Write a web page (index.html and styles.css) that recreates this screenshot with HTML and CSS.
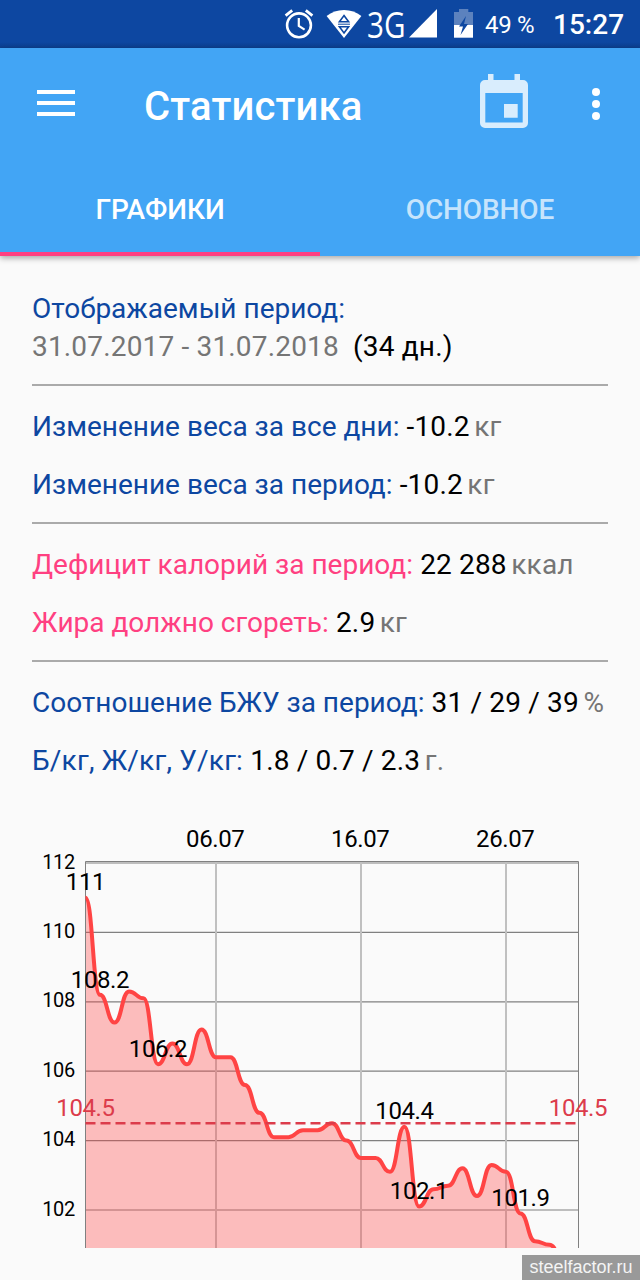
FILE: index.html
```html
<!DOCTYPE html>
<html lang="ru">
<head>
    <meta charset="UTF-8">
    <meta name="viewport" content="width=device-width, initial-scale=1.0">
    <title>Статистика</title>
    <link rel="stylesheet" href="styles.css">
</head>
<body>
    <div class="status-bar">
        <!-- Alarm -->
        <svg class="icon-alarm" width="30" height="48" viewBox="284 0 30 48" fill="none" stroke="#fff">
            <circle cx="299" cy="25.3" r="11.9" stroke-width="2.6"/>
            <path d="M298.8 18v8l5.8 3.6" stroke-width="2.2"/>
            <path d="M285.6 15.6l6.6-5.2M312.4 15.6l-6.6-5.2" stroke-width="2.8"/>
        </svg>
        <!-- Wi-Fi -->
        <svg class="icon-wifi" width="36" height="48" viewBox="326 0 36 48">
            <path d="M344 38L326.6 16Q334 10 344 10T361.4 16Z" fill="#fff"/>
            <path d="M344 15.5l4.6 6.3h-9.2zM344 33l4.6-6.3h-9.2z" fill="#fff" stroke="#0d47a1" stroke-width="1.6"/>
            <path d="M338 24.2h12" stroke="#0d47a1" stroke-width="1"/>
        </svg>
        <svg class="icon-network" width="73" height="54" viewBox="364 0 73 54" fill="#fff">
            <text class="network-text" x="367" y="37.6" textLength="38.500" lengthAdjust="spacingAndGlyphs">3G</text>
            <path d="M409 37.4L437 9v28.4z"/>
        </svg>
        <!-- Battery -->
        <svg class="icon-battery" width="19" height="48" viewBox="454 0 19 48">
            <path d="M454 12h5V9h9.300v3h4.700v13h-19z" fill="#5c82be"/>
            <path d="M454 25h19v12.700h-19z" fill="#fff"/>
            <path d="M466 16l-7 10.500h4l-2.500 8.500 7.500-11h-4z" fill="#0d47a1"/>
        </svg>
        <span class="battery-level">49 %</span>
        <span class="clock">15:27</span>
    </div>

    <header>
        <div class="toolbar">
            <svg class="icon-menu" width="38" height="26" viewBox="0 0 38 26" fill="#fff">
                <path d="M0 0h38v4H0zM0 11h38v4H0zM0 22h38v4H0z"/>
            </svg>
            <h1>Статистика</h1>
            <svg class="icon-calendar" width="48" height="54" viewBox="0 0 48 54">
                <path fill-rule="evenodd" d="M8 0h5.500v6h21V0h5.500v6h3a5 5 0 0 1 5 5v38a5 5 0 0 1-5 5H5a5 5 0 0 1-5-5V11a5 5 0 0 1 5-5h3zM5.300 19v29.500h37.400V19zM24 30h13.700v13.700H24z"/>
            </svg>
            <svg class="icon-more" width="8" height="32" viewBox="0 0 8 32" fill="#fff">
                <circle cx="4" cy="4" r="4"/>
                <circle cx="4" cy="16" r="4"/>
                <circle cx="4" cy="28" r="4"/>
            </svg>
        </div>
        <nav class="tabs">
            <a class="tab active">ГРАФИКИ</a>
            <a class="tab">ОСНОВНОЕ</a>
        </nav>
    </header>

    <main>
        <section class="group period">
            <p class="label">Отображаемый период:</p>
            <p><span class="unit">31.07.2017 - 31.07.2018</span>&nbsp; (34 дн.)</p>
        </section>
        <section class="group">
            <p><span class="label">Изменение веса за все дни:</span> -10.2<span class="unit suffix">кг</span></p>
            <p><span class="label">Изменение веса за период:</span> -10.2<span class="unit suffix">кг</span></p>
        </section>
        <section class="group">
            <p><span class="label pink">Дефицит калорий за период:</span> 22 288<span class="unit suffix">ккал</span></p>
            <p><span class="label pink">Жира должно сгореть:</span> 2.9<span class="unit suffix">кг</span></p>
        </section>
        <section class="group">
            <p><span class="label">Соотношение БЖУ за период:</span> 31 / 29 / 39<span class="unit suffix">%</span></p>
            <p><span class="label wide">Б/кг, Ж/кг, У/кг:</span> 1.8 / 0.7 / 2.3<span class="unit suffix">г.</span></p>
        </section>
    </main>

    <svg class="chart" width="640" height="448" viewBox="0 800 640 448">
        <g id="grid"></g>
        <path id="area" class="area"/>
        <path class="frame" d="M85.500 1248V861.500H578.500V1248"/>
        <path id="line" class="line"/>
        <path class="limit" d="M85.500 1123.300H578"/>
        <g id="labels"></g>
    </svg>

    <div class="watermark">steelfactor.ru</div>

    <script>
        const weights = [111, 108.2, 107.4, 108.3, 108.1, 106.2, 106.8, 106.2, 107.2, 106.4, 106.4, 105.6,
            104.8, 104.1, 104.1, 104.3, 104.3, 104.5, 104, 103.5, 103.5, 103.1, 104.4, 102.1, 102.6, 102.7,
            103.2, 102.4, 103.3, 103.1, 101.9, 101.1, 101, 100.5];

        const left = 85.5;
        const step = 14.5;
        const x = i => left + i * step;
        const y = value => 863 + (112 - value) * 34.7;

        // Smooth line through all the points
        let d = `M${x(0)} ${y(weights[0])}`;
        for (let i = 1; i < weights.length; i++) {
            const middle = x(i) - step / 2;
            d += `C${middle} ${y(weights[i - 1])} ${middle} ${y(weights[i])} ${x(i)} ${y(weights[i])}`;
        }
        document.getElementById("line").setAttribute("d", d);
        document.getElementById("area").setAttribute("d", `${d}V1260H${left}Z`);

        // Grid and axis labels
        let grid = "";
        let labels = "";
        for (let value = 112; value >= 102; value -= 2) {
            grid += `<path class="grid-line" d="M${left} ${y(value)}H578.500"/>`;
            labels += `<text class="axis-y" x="75" y="${y(value) + 5.6}">${value}</text>`;
        }
        [["06.07", 9], ["16.07", 19], ["26.07", 29]].forEach(([date, i]) => {
            grid += `<path class="grid-line vertical" d="M${x(i)} 862V1248"/>`;
            labels += `<text x="${x(i) - 0.8}" y="847">${date}</text>`;
        });

        // Value labels above the points
        [0, 1, 5, 22, 23, 30].forEach(i => {
            labels += `<text x="${x(i)}" y="${y(weights[i]) - 7.3}">${weights[i]}</text>`;
        });
        labels += '<text class="limit-label" x="85.500" y="1116">104.5</text>';
        labels += '<text class="limit-label" x="578" y="1116">104.5</text>';

        document.getElementById("grid").innerHTML = grid;
        document.getElementById("labels").innerHTML = labels;
    </script>
</body>
</html>
```
FILE: styles.css
```css
body {
    margin: 0;
    width: 640px;
    height: 1280px;
    overflow: hidden;
    position: relative;
    background: #fafafa;
    font-family: Roboto, sans-serif;
    font-size: 28px;
    color: #000;
}

svg {
    display: block;
    flex-shrink: 0;
}

.status-bar {
    display: flex;
    height: 48px;
    padding-left: 284px;
    background: linear-gradient(#0d47a1 42px, #0c3f8f);
    color: #fff;
    line-height: 50px;
    white-space: nowrap;
}

.icon-wifi {
    margin-left: 12px;
}

.icon-network {
    margin-left: 2px;
    overflow: visible;
}

.network-text {
    font-family: "Open Sans", sans-serif;
    font-size: 37px;
}

.icon-battery {
    margin-left: 17px;
}

.battery-level {
    width: 68px;
    margin-left: 12px;
    font-size: 24px;
    letter-spacing: -0.3px;
}

.clock {
    font-weight: 500;
}

header {
    height: 208px;
    background: #42a5f5;
    box-shadow: 0 2px 6px rgba(0, 0, 0, 0.35);
}

.toolbar {
    display: flex;
    align-items: center;
    height: 112px;
    padding: 0 40px 0 37px;
}

.icon-menu {
    margin-bottom: 2px;
}

.toolbar h1 {
    flex: 1;
    margin: 6px 0 0 69px;
    font-size: 40px;
    font-weight: 500;
    letter-spacing: 0.15px;
    line-height: 48px;
    color: #fff;
}

.icon-calendar {
    margin: 0 64px 6px 0;
    fill: #d9edfd;
}

.tabs {
    display: flex;
    height: 96px;
}

.tab {
    flex: 1;
    box-sizing: border-box;
    border-bottom: 4px solid transparent;
    font-weight: 500;
    letter-spacing: -0.1px;
    line-height: 100px;
    text-align: center;
    color: #c6e4fc;
}

.tab.active {
    border-color: #ff4081;
    color: #fff;
}

main {
    padding: 34px 32px 0;
}

.group {
    padding: 12px 0 8px;
    border-top: 2px solid #aaa;
}

.group p {
    margin: 0;
    height: 58px;
    line-height: 58px;
    letter-spacing: 0.17px;
    white-space: nowrap;
}

.group.period {
    padding: 0 0 18px;
    border: none;
}

.group.period p {
    height: 38px;
    line-height: 38px;
}

.group .label {
    color: #0d47a1;
    letter-spacing: 0;
}

.group .label.pink {
    color: #ff4081;
}

.group .label.wide {
    letter-spacing: 0.2px;
}

.unit {
    color: #757575;
}

.suffix {
    margin-left: 4.5px;
}

.chart {
    margin-top: 2px;
}

.chart text {
    font-size: 24px;
    letter-spacing: -0.4px;
    text-anchor: middle;
}

.chart .axis-y {
    font-size: 20px;
    letter-spacing: -0.3px;
    text-anchor: end;
}

.chart .limit-label {
    fill: #dc3c4b;
}

.area {
    fill: #ff4444;
    fill-opacity: 0.34;
}

.grid-line {
    stroke: #808080;
    stroke-width: 1.2;
}

.grid-line.vertical {
    stroke: #c0c0c0;
    stroke-width: 2;
}

.frame {
    fill: none;
    stroke: #808080;
    stroke-width: 1;
}

.line {
    fill: none;
    stroke: #ff4444;
    stroke-width: 4;
}

.limit {
    stroke: #dc3c4b;
    stroke-width: 2.4;
    stroke-dasharray: 10 5;
}

/* Site mark over the page corner */
.watermark {
    position: absolute;
    right: 0;
    bottom: 0;
    width: 118px;
    height: 25px;
    background: #999;
    color: #f4f4f4;
    font-family: "Liberation Sans", sans-serif;
    font-size: 18px;
    line-height: 25px;
    text-align: center;
}
```
